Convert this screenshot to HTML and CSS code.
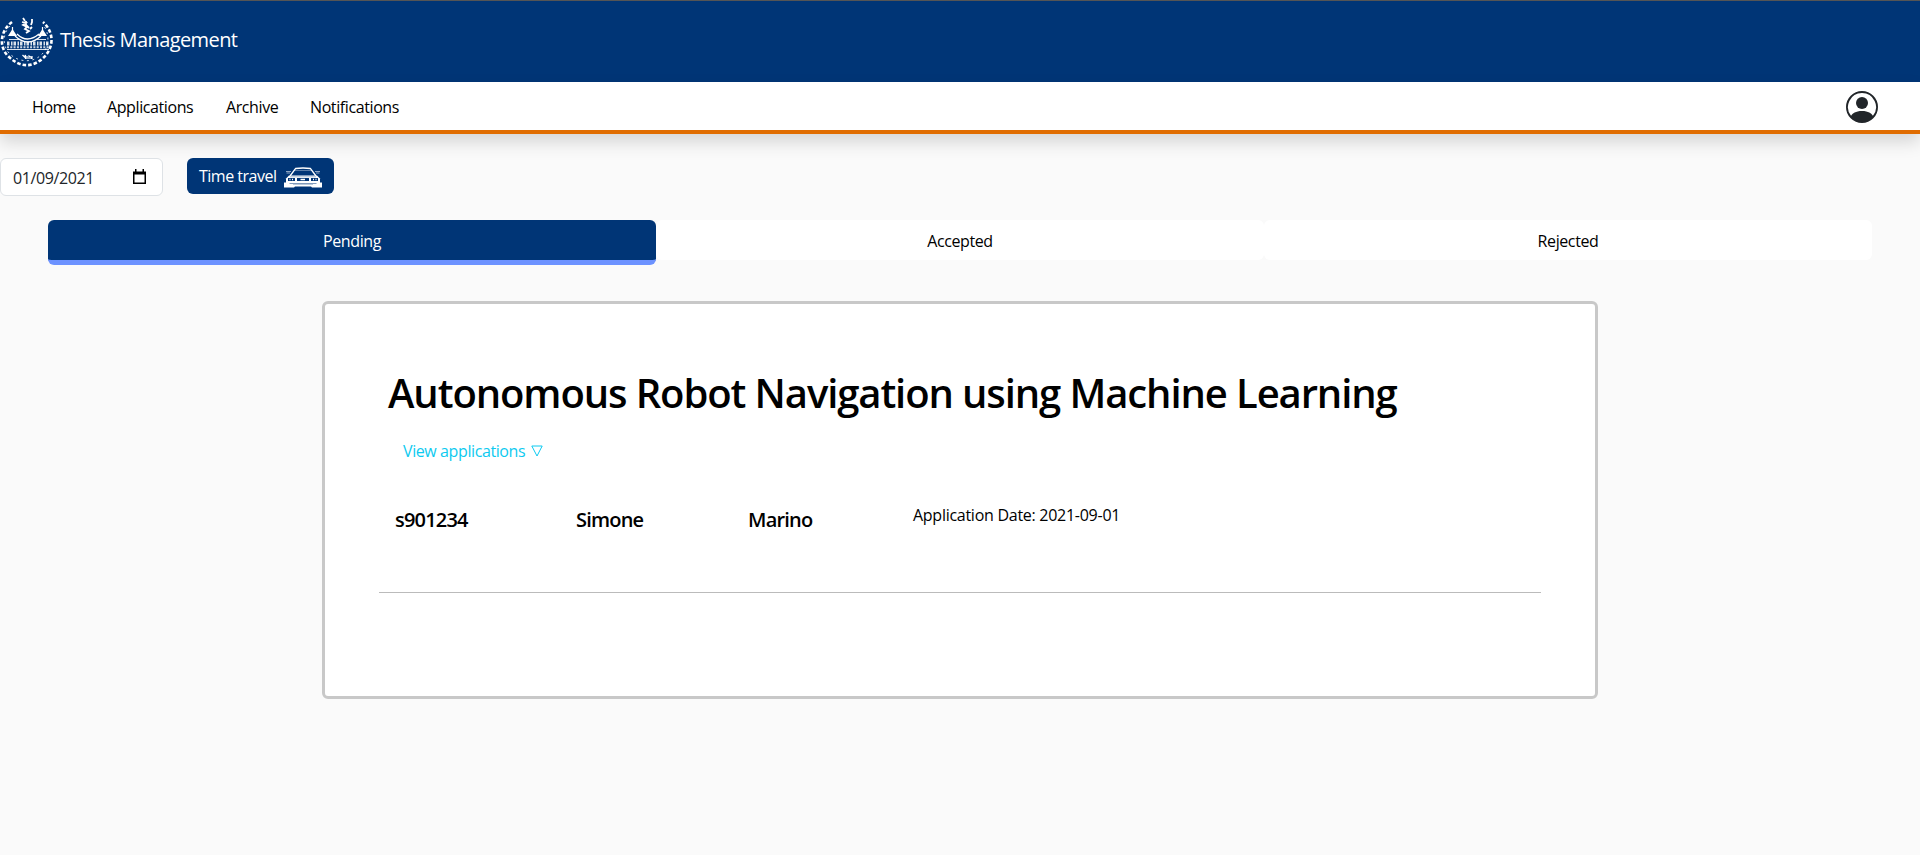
FILE: index.html
```html
<!DOCTYPE html>
<html lang="en">
<head>
<meta charset="utf-8">
<title>Thesis Management</title>
<link rel="stylesheet" href="styles.css">
</head>
<body>
<header class="brand-bar">
  <svg class="crest" viewBox="0 0 54 54" fill="none" stroke="#fff">
    <path d="M12 7C1 15-2 31 8 41S30 54 42 44S55 18 43 7" stroke-width="2.600" stroke-dasharray="3.600 2"/>
    <path d="M10 11C3 18 2 30 9 38S30 49 40 41S50 18 43 10" stroke-width="1" stroke-dasharray="2 3.500" opacity=".8"/>
    <path d="M23 3l2 3M22 7l4 1-3 2 4 2-2 2 4 2-3 2M26 6v4l3 3M32 4v3l-1 3M30 14l2-2" stroke-width="1.800"/>
    <path d="M8 21l4.500-7 4.500 7zM38 21l4.500-7 4.500 7z" fill="#fff" stroke="none"/>
    <path d="M12.500 12v6M42.500 12v6" stroke-width="1.200"/>
    <path d="M17 19q10 10 22 0M15 21q13 12 26 0" stroke-width="1.200"/>
    <path d="M9 24.500h10M36 24.500h10M7 34.500h42" stroke-width="1.200" opacity=".85"/>
    <path d="M7 28.500h42" stroke-width="4" stroke-dasharray="2.500 1.500 1.500 1" opacity=".85"/>
    <path d="M7 32.300h42" stroke-width="2" stroke-dasharray="2 1.300" opacity=".8"/>
    <path d="M22.500 40l2 2 1-2v4M27 41v3M29 44v-3l2 1v2M32 41v3" stroke-width="1.200"/>
  </svg>
  <span class="brand-name">Thesis Management</span>
</header>
<nav class="nav">
  <a class="nav-link nav-home">Home</a>
  <a class="nav-link nav-applications">Applications</a>
  <a class="nav-link nav-archive">Archive</a>
  <a class="nav-link nav-notifications">Notifications</a>
  <svg class="avatar" viewBox="0 0 16 16" fill="#212529">
    <path d="M11 6a3 3 0 1 1-6 0 3 3 0 0 1 6 0z"/>
    <path fill-rule="evenodd" d="M0 8a8 8 0 1 1 16 0A8 8 0 0 1 0 8zm8-7a7 7 0 0 0-5.468 11.370C3.242 11.226 4.805 10 8 10s4.757 1.225 5.468 2.370A7 7 0 0 0 8 1z"/>
  </svg>
</nav>
<main>
  <div class="tools">
    <div class="date-field">
      <span class="date-value">01/09/2021</span>
      <svg class="calendar" viewBox="0 0 13 15"><path d="M0 2.500h13V15H0zM2 0h1.500v3H2zM9.500 0H11v3H9.500z"/><path d="M1.500 5.500h10v8h-10z" fill="#fff"/></svg>
    </div>
    <button class="travel"><span class="travel-label">Time travel</span>
      <svg class="car" viewBox="0 0 38 21" fill="none" stroke="#fff">
        <path d="M6 9L11.500 1.500Q19 .5 26.500 1.500L32 9" stroke-width="1.300"/>
        <path d="M10 3.500h18" stroke-width=".6" opacity=".6"/>
        <path d="M2 4.500h5M2.500 6h3.500M31 4.500h5M32 6h3.500" stroke-width=".8" opacity=".7"/>
        <path d="M5 8.500h28l3 3v4.500H2v-4.500z" fill="#fff" stroke="none"/>
        <path d="M4 12.500h7M13 12.500h12M27 12.500h7" stroke="#003576" stroke-width="3.200"/>
        <path d="M5.500 12.500h1M8 12.500h1M16.500 12.500h4.500M29 12.500h1M31.500 12.500h1" stroke-width="1.300"/>
        <path d="M6 9.800h26" stroke="#8ba5c2" stroke-width=".7"/>
        <path d="M0 15.500h4l2 1h26l2-1h4v5H28l-1-1H11l-1 1H0z" fill="#fff" stroke="none"/>
        <path d="M9 17.500h20" stroke="#8ba5c2" stroke-width=".6"/>
      </svg>
    </button>
  </div>
  <div class="tabs">
    <div class="tab tab-active">Pending</div>
    <div class="tab">Accepted</div>
    <div class="tab">Rejected</div>
  </div>
  <section class="card">
    <h1 class="title">Autonomous Robot Navigation using Machine Learning</h1>
    <a class="toggle"><span>View applications</span><svg class="triangle" viewBox="0 0 12 12"><path d="M.8 1h10.400L6 11z" fill="none" stroke="#0dcaf0"/></svg></a>
    <div class="application">
      <span class="student student-id">s901234</span>
      <span class="student student-name">Simone</span>
      <span class="student student-surname">Marino</span>
      <span class="applied">Application Date: 2021-09-01</span>
    </div>
  </section>
</main>
</body>
</html>
```
FILE: styles.css
```css
* { box-sizing: border-box; }
body {
  margin: 0;
  min-height: 855px;
  background: #fafafa;
  color: #000;
  font: 16px/24px "Open Sans", "Noto Sans", sans-serif;
  letter-spacing: -0.4px;
}
.brand-bar {
  height: 82px;
  border-top: 1px solid #555;
  background: #003576;
  color: #fff;
  display: flex;
  align-items: flex-start;
}
.crest { width: 54px; height: 54px; margin: 14px 6px 0 0; }
.brand-name { font-size: 20px; line-height: 30px; margin-top: 24px; letter-spacing: -0.6px; }
.nav {
  height: 52px;
  background: #fff;
  border-bottom: 4px solid #e06c00;
  box-shadow: 0 8px 16px rgba(0, 0, 0, .15);
  display: flex;
  align-items: center;
  padding: 2px 42px 0 32px;
}
.nav-home { width: 75px; }
.nav-applications { width: 119px; }
.nav-archive { width: 84px; }
.avatar { width: 32px; height: 32px; margin-left: auto; }
.tools { display: flex; padding-top: 24px; height: 86px; gap: 24px; }
.date-field {
  width: 163px;
  height: 38px;
  border: 1px solid #dee2e6;
  border-radius: 6px;
  background: #fff;
  color: #212529;
  display: flex;
  align-items: center;
  justify-content: space-between;
  padding: 1px 16px 0 12px;
}
.calendar { width: 13px; height: 15px; margin-top: -3px; }
.travel {
  width: 147px;
  height: 36px;
  border: 0;
  border-radius: 6px;
  background: #003576;
  color: #fff;
  font: inherit;
  letter-spacing: -0.5px;
  display: flex;
  align-items: center;
  justify-content: space-between;
  padding: 0 12px;
}
.car { width: 38px; height: 21px; margin-top: 3px; }
.tabs { display: flex; align-items: flex-start; padding: 0 48px; height: 81px; }
.tab {
  flex: 1;
  height: 40px;
  line-height: 42px;
  text-align: center;
  background: #fff;
  border-radius: 6px;
}
.tab-active { height: 45px; background: #003576; color: #fff; border-bottom: 5px solid #6c92ff; }
.card {
  width: 1276px;
  height: 398px;
  margin: 0 auto;
  border: 3px solid #c8c8c8;
  border-radius: 6px;
  background: #fff;
  padding: 65px 54px 0;
}
.title { margin: 0 0 0 9px; font-size: 40px; line-height: 48px; font-weight: 600; letter-spacing: -1.1px; white-space: nowrap; }
.toggle { display: flex; align-items: center; gap: 6px; margin: 22px 0 0 24px; height: 24px; color: #0dcaf0; }
.triangle { width: 12px; height: 12px; }
.application { display: flex; height: 130px; border-bottom: 1px solid #bbb; padding: 40px 0 0 16px; }
.student { font-size: 20px; font-weight: 600; line-height: 34px; letter-spacing: -0.8px; }
.student-id { width: 181px; }
.student-name { width: 172px; }
.student-surname { width: 165px; }
.applied { letter-spacing: -0.27px; }
```
